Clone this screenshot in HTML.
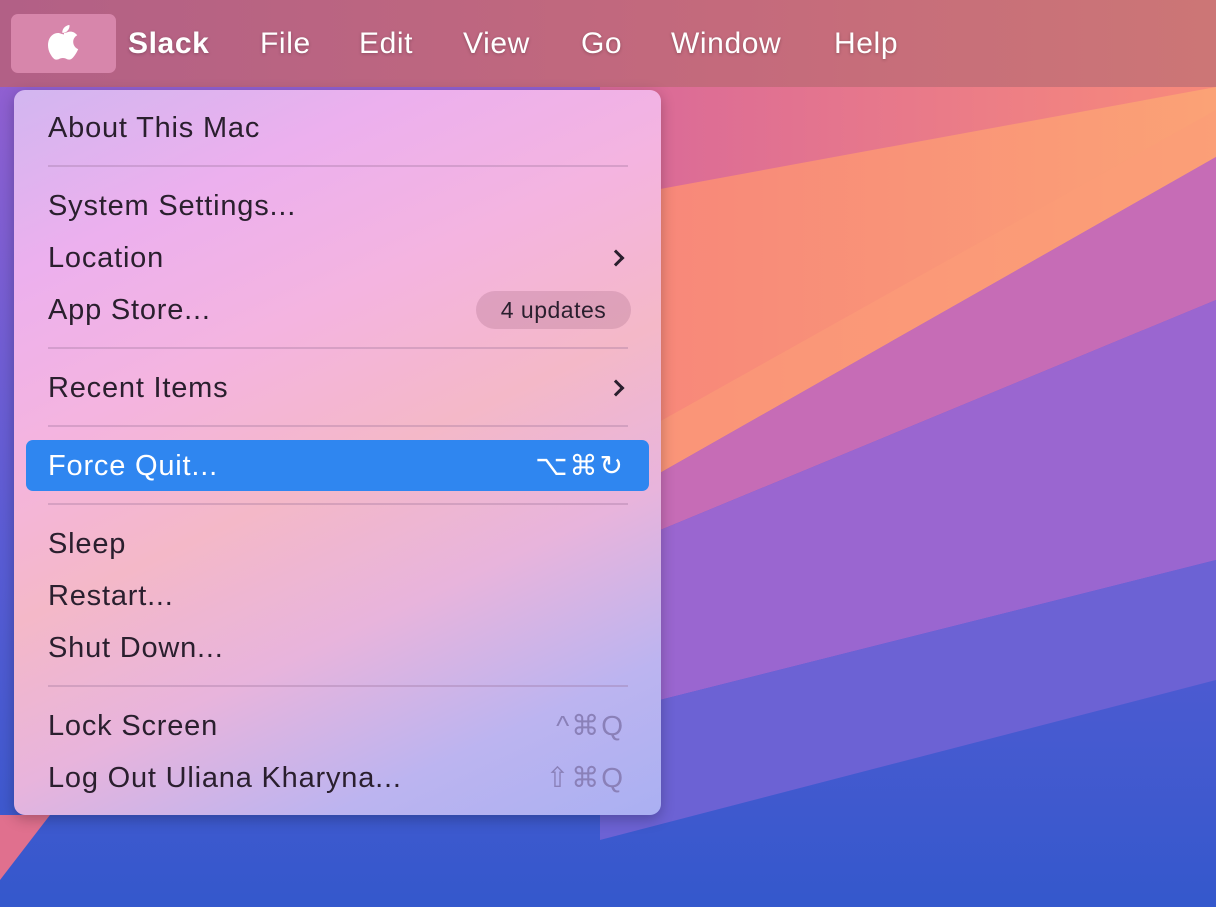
<!DOCTYPE html>
<html><head><style>
*{margin:0;padding:0;box-sizing:border-box}
html,body{width:1216px;height:907px;overflow:hidden}
body{position:relative;font-family:"Liberation Sans",sans-serif;background:#5a5ad0}
#bg{position:absolute;left:0;top:0;display:block}
#bar{position:absolute;left:0;top:0;width:1216px;height:87px;background:linear-gradient(90deg,#b26086,#c46a7c 60%,#cc7676);}
#bar span{position:absolute;top:27px;font-size:30px;color:#fff;letter-spacing:0.6px;text-shadow:0 1px 3px rgba(0,0,0,.25)}
#apple{position:absolute;left:11px;top:14px;width:105px;height:59px;border-radius:7px;background:#d786ab}
#menu{position:absolute;left:14px;top:90px;width:647px;height:725px;border-radius:11px;
background:linear-gradient(155deg,#d2b6f0 0%,#ecb0ee 18%,#f4b4e0 35%,#f4b8c8 52%,#e8b4dc 68%,#bcb4f0 85%,#aab0f2 100%);
box-shadow:0 4px 14px rgba(0,0,0,.25)}
.it{position:absolute;left:34px;font-size:29px;color:#2a1f2e;line-height:32px;letter-spacing:0.8px}
.sep{position:absolute;left:34px;width:580px;height:2px;background:rgba(150,110,150,.3)}
.chev{position:absolute;left:596px;width:12px;height:12px;border-right:3px solid #2a1f2e;border-top:3px solid #2a1f2e;transform:rotate(45deg)}
.sc{position:absolute;right:36px;font-size:28px;color:#8a80b8;line-height:32px;letter-spacing:2px}
</style></head><body>
<svg id="bg" width="1216" height="907" viewBox="0 0 1216 907">
<defs>
<linearGradient id="g1" x1="0" y1="0" x2="0" y2="1"><stop offset="0" stop-color="#9a60d0"/><stop offset="0.6" stop-color="#5a5cd4"/><stop offset="1" stop-color="#3458cc"/></linearGradient>
<linearGradient id="g2" x1="0" y1="0" x2="1" y2="0"><stop offset="0" stop-color="#f7857a"/><stop offset="1" stop-color="#fba276"/></linearGradient>
<linearGradient id="g3" x1="0" y1="0" x2="1" y2="0"><stop offset="0" stop-color="#d8689a"/><stop offset="1" stop-color="#f88a7a"/></linearGradient>
</defs>
<rect width="1216" height="907" fill="url(#g1)"/>
<polygon points="600,87 1216,87 1216,95 600,200" fill="url(#g3)"/>
<polygon points="600,200 1216,87 1216,157 600,507" fill="url(#g2)"/>
<polygon points="600,455 1216,110 1216,157 600,507" fill="#fb9c78" opacity="0.6"/>
<polygon points="600,507 1216,157 1216,300 600,555" fill="#c66cb6"/>
<polygon points="600,555 1216,300 1216,560 600,715" fill="#9a66d0"/>
<polygon points="600,715 1216,560 1216,680 600,840" fill="#6c62d4"/>
<polygon points="0,815 50,815 0,880" fill="#e0708e"/>
</svg>
<div id="bar">
<div id="apple"></div>
<svg style="position:absolute;left:48px;top:24px" width="32" height="38" viewBox="0 0 32 38"><path d="M16 9c2 0 3.8-1.4 6.5-1.4 2.4 0 5 1.3 6.7 3.6-5.9 3.2-5 11.6 1 13.9-.8 2-1.7 3.6-3 5.5-1.8 2.6-3.6 5-6 5-2.6 0-3.2-1.6-6.3-1.6s-3.8 1.6-6.3 1.6C6 36 4 32.8 2.5 30.3-1.6 23.5-.4 14.4 4.4 11c1.6-1.2 3.6-2 5.6-2 2.4 0 4 1.4 6 1.4z" fill="#fff"/><path d="M21.5 1c.3 2.2-.6 4.2-1.9 5.6-1.3 1.5-3.3 2.5-5.2 2.3-.3-2 .7-4 1.9-5.4C17.7 2 19.8 1 21.5 1z" fill="#fff"/></svg>
<span style="left:128px;font-weight:bold">Slack</span>
<span style="left:260px">File</span>
<span style="left:359px">Edit</span>
<span style="left:463px">View</span>
<span style="left:581px">Go</span>
<span style="left:671px">Window</span>
<span style="left:834px">Help</span>
</div>
<div id="menu">
<div class="it" style="top:22px">About This Mac</div>
<div class="sep" style="top:75px"></div>
<div class="it" style="top:100px">System Settings...</div>
<div class="it" style="top:152px">Location</div>
<div class="chev" style="top:162px"></div>
<div class="it" style="top:204px">App Store...</div>
<div style="position:absolute;left:462px;top:201px;width:155px;height:38px;border-radius:19px;background:rgba(180,120,150,.35);font-size:23px;color:#2a1f2e;text-align:center;line-height:38px;letter-spacing:0.5px">4 updates</div>
<div class="sep" style="top:257px"></div>
<div class="it" style="top:282px">Recent Items</div>
<div class="chev" style="top:292px"></div>
<div class="sep" style="top:335px"></div>
<div style="position:absolute;left:12px;top:350px;width:623px;height:51px;border-radius:7px;background:#2f86f0"></div>
<div class="it" style="top:360px;color:#fff">Force Quit...</div>
<div class="sc" style="top:360px;color:#fff">⌥⌘↻</div>
<div class="sep" style="top:413px"></div>
<div class="it" style="top:438px">Sleep</div>
<div class="it" style="top:490px">Restart...</div>
<div class="it" style="top:542px">Shut Down...</div>
<div class="sep" style="top:595px"></div>
<div class="it" style="top:620px">Lock Screen</div>
<div class="sc" style="top:620px">^⌘Q</div>
<div class="it" style="top:672px">Log Out Uliana Kharyna...</div>
<div class="sc" style="top:672px">⇧⌘Q</div>
</div>
</body></html>
